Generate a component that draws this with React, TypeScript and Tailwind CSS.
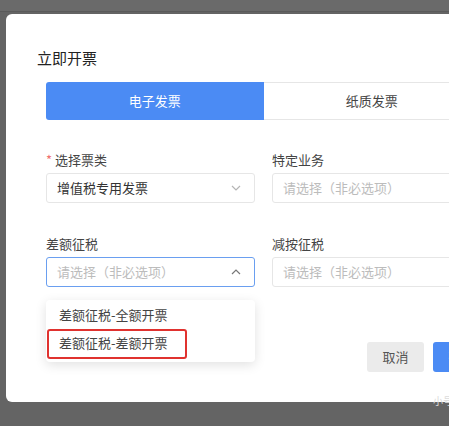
import React from "react";

const font = { fontFamily: '"Noto Sans CJK SC", "Noto Sans", sans-serif' };

function Chevron({ up }: { up?: boolean }) {
  return (
    <svg width="10" height="6" viewBox="0 0 10 6" className={up ? "text-[#777]" : "text-[#b5b5b5]"}>
      <polyline
        points={up ? "1,5 5,1 9,5" : "1,1 5,5 9,1"}
        fill="none"
        stroke="currentColor"
        strokeWidth="1.2"
      />
    </svg>
  );
}

function Select({ value, placeholder, focused, up }: { value?: string; placeholder?: string; focused?: boolean; up?: boolean }) {
  return (
    <div
      className={`h-[30px] flex items-center justify-between pl-[10px] pr-[13px] rounded-[3px] border bg-white ${
        focused ? "border-[#6a9ff0]" : "border-[#e6e6e6]"
      }`}
    >
      <span className={`text-[13px] ${value ? "text-[#333]" : "text-[#bcbcbc]"}`}>{value ?? placeholder}</span>
      {(value || focused) && <Chevron up={up} />}
    </div>
  );
}

export default function App() {
  return (
    <div className="w-[449px] h-[426px] bg-[#646464] overflow-hidden relative" style={font}>
      <div className="h-[12px] bg-[#6a6a6a] border-b border-[#5a5a5a]" />
      <div className="ml-[6px] mt-[2px] w-[508px] h-[388px] bg-white rounded-[6px] pt-[33px]">
        <div className="pl-[31px] text-[15px] leading-[22px] text-[#222]">立即开票</div>

        <div className="ml-[40px] w-[435px] mt-[13px]">
          {/* 发票类型切换 */}
          <div className="grid grid-cols-2 h-[38px] text-[13px]">
            <div className="bg-[#4b8bf4] text-white rounded-l-[3px] flex items-center justify-center">电子发票</div>
            <div className="border border-l-0 border-[#e6e6e6] text-[#444] flex items-center justify-center">纸质发票</div>
          </div>

          <div className="grid grid-cols-2 gap-x-[17px] mt-[30px]">
            <div>
              <div className="text-[13px] leading-[20px] text-[#444]">
                <span className="text-[#f07070] mr-[3px]">*</span>选择票类
              </div>
              <div className="mt-[3px]">
                <Select value="增值税专用发票" />
              </div>
            </div>
            <div>
              <div className="text-[13px] leading-[20px] text-[#444]">特定业务</div>
              <div className="mt-[3px]">
                <Select placeholder="请选择（非必选项）" />
              </div>
            </div>

            <div className="mt-[31px] relative">
              <div className="text-[13px] leading-[20px] text-[#444]">差额征税</div>
              <div className="mt-[3px]">
                <Select placeholder="请选择（非必选项）" focused up />
              </div>
              {/* 下拉选项 */}
              <div className="absolute left-0 right-0 top-[66px] bg-white rounded-[4px] shadow-[0_3px_12px_rgba(0,0,0,0.12)] pt-[1px] pb-[5px] z-10">
                <div className="h-[28px] flex items-center pl-[13px] text-[13px] text-[#444]">差额征税-全额开票</div>
                <div className="h-[28px] flex items-center pl-[13px] text-[13px] text-[#444]">差额征税-差额开票</div>
                <div className="absolute left-[1px] top-[29px] w-[140px] h-[30px] border-2 border-[#e0322f] rounded-[3px]" />
              </div>
            </div>
            <div className="mt-[31px]">
              <div className="text-[13px] leading-[20px] text-[#444]">减按征税</div>
              <div className="mt-[3px]">
                <Select placeholder="请选择（非必选项）" />
              </div>
            </div>
          </div>
        </div>

        <div className="flex justify-end gap-[9px] pr-[24px] mt-[55px]">
          <button className="w-[57px] h-[30px] rounded-[3px] bg-[#ebebeb] text-[13px] text-[#555]">取消</button>
          <button className="w-[57px] h-[30px] rounded-[3px] bg-[#4b8bf4] text-[13px] text-white">确定</button>
        </div>
      </div>
      <span className="absolute left-[433px] top-[395px] text-[10px] leading-[12px] whitespace-nowrap text-[#dcdcdc]">小号</span>
    </div>
  );
}
